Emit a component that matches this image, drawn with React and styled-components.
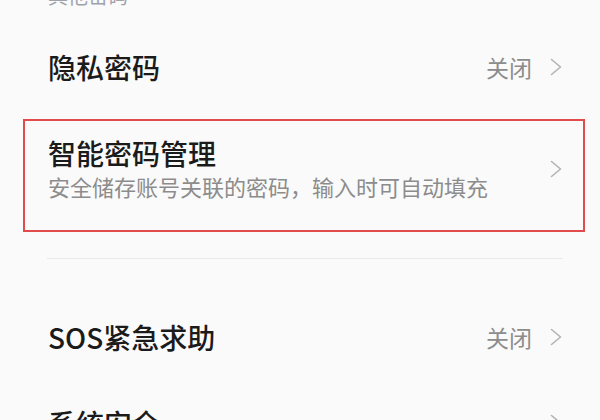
import React from 'react';
import styled, { createGlobalStyle } from 'styled-components';

const GlobalStyle = createGlobalStyle`
  html, body {
    margin: 0;
    padding: 0;
    background: #fafafa;
  }
  body {
    font-family: "Noto Sans CJK SC", "Noto Sans", sans-serif;
    overflow: hidden;
  }
`;

const Page = styled.div`
  width: 600px;
  height: 420px;
  overflow: hidden;
  background: #fafafa;
  padding: 0 15px 0 23px;
  box-sizing: border-box;
`;

const SectionLabel = styled.div`
  margin: -16px 0 16px 25px;
  height: 24px;
  line-height: 24px;
  font-size: 20px;
  color: #9ea2aa;
`;

const Row = styled.div`
  box-sizing: border-box;
  display: flex;
  align-items: center;
  min-height: 86px;
  padding: ${(p) => (p.$highlight ? '15px 21px 28px 23px' : '0 21px 0 23px')};
  margin: ${(p) => (p.$highlight ? '9px 0 26px' : '0')};
  border: 2px solid ${(p) => (p.$highlight ? '#e14b4b' : 'transparent')};
`;

const Texts = styled.div`
  flex: 1;
  display: flex;
  flex-direction: column;
`;

const Title = styled.div`
  font-size: 28px;
  line-height: 34px;
  font-weight: 500;
  color: #1b1b1b;
`;

const Subtitle = styled.div`
  font-size: 22px;
  line-height: 32px;
  color: #8c8c8c;
`;

const Value = styled.span`
  font-size: 23px;
  line-height: 30px;
  color: #8c8c8c;
  margin-right: 18px;
`;

const Divider = styled.div`
  height: 1px;
  background: #e9e9e9;
  margin: 0 22px 35px 24px;
`;

const Chevron = () => (
  <svg width="12" height="18" viewBox="0 0 12 18" fill="none">
    <path d="M1.5 1.5 L10.5 9 L1.5 16.5" stroke="#b3b3b3" strokeWidth="1.6" strokeLinecap="round" strokeLinejoin="round" />
  </svg>
);

const SettingRow = ({ title, subtitle, value, highlight }) => (
  <Row $highlight={highlight}>
    <Texts>
      <Title>{title}</Title>
      {subtitle && <Subtitle>{subtitle}</Subtitle>}
    </Texts>
    {value && <Value>{value}</Value>}
    <Chevron />
  </Row>
);

const App = () => (
  <Page>
    <GlobalStyle />
    <SectionLabel>其他密码</SectionLabel>
    <SettingRow title="隐私密码" value="关闭" />
    <SettingRow
      title="智能密码管理"
      subtitle="安全储存账号关联的密码，输入时可自动填充"
      highlight
    />
    <Divider />
    <SettingRow title="SOS紧急求助" value="关闭" />
    <SettingRow title="系统安全" />
  </Page>
);

export default App;
